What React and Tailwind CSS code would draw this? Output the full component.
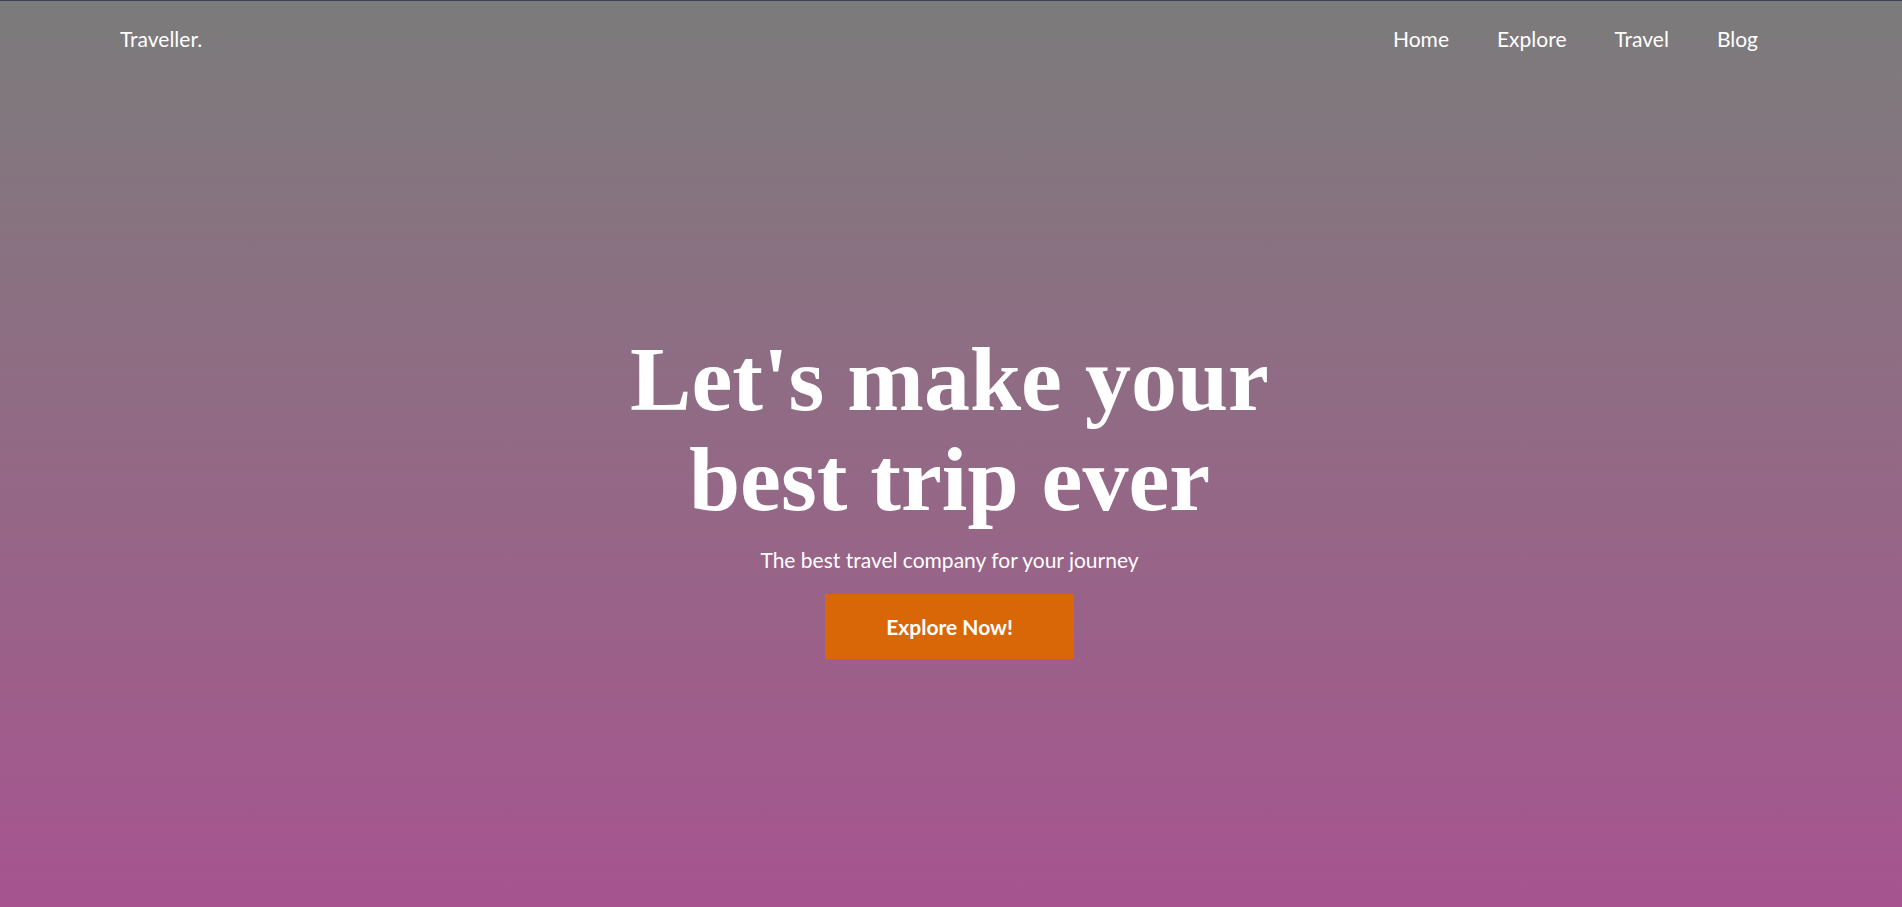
import React from 'react';

const links = ['Home', 'Explore', 'Travel', 'Blog'];

const App = () => {
  return (
    <div
      className="h-[907px] w-full overflow-hidden border-t border-[#3b4052] bg-gradient-to-b from-[#7b7b7b] to-[#a6538f] text-white"
      style={{ fontFamily: 'Lato, "Noto Sans", sans-serif' }}
    >
      <nav className="flex items-center justify-between pl-[120px] pr-[144px] pt-[24px]">
        <a href="#" className="text-[21px] leading-[28px]">Traveller.</a>
        <ul className="flex gap-12">
          {links.map((l) => (
            <li key={l}>
              <a href="#" className="text-[21px] leading-[28px]">{l}</a>
            </li>
          ))}
        </ul>
      </nav>

      <section className="mt-[276px] flex flex-col items-center pr-[3px] text-center">
        <h1
          className="text-[92px] font-bold leading-[100px]"
          style={{ fontFamily: '"Liberation Serif", serif' }}
        >
          Let's make your
          <br />
          best trip ever
        </h1>
        <p className="mt-[17px] text-[21px] leading-[28px]">The best travel company for your journey</p>
        <button className="mt-[20px] h-[65px] w-[249px] bg-[#d96708] text-[21px] font-bold">
          Explore Now!
        </button>
      </section>
    </div>
  );
};

export default App;
